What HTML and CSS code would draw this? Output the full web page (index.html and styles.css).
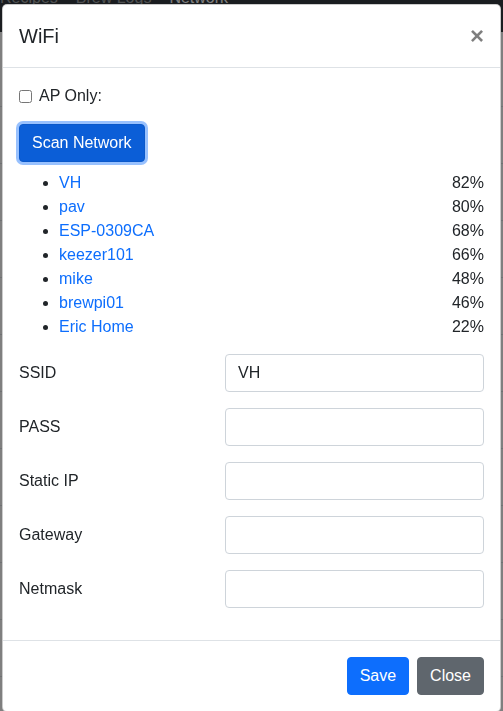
FILE: index.html
```html
<!DOCTYPE html>
<html>
<head>
<meta charset="utf-8">
<link rel="stylesheet" href="styles.css">
</head>
<body>
<nav class="navbar">
  <a class="nav-link">Recipes</a>
  <a class="nav-link">Brew Logs</a>
  <a class="nav-link active">Network</a>
</nav>
<main class="page"></main>
<div class="backdrop"></div>
<div class="modal">
  <div class="modal-header">
    <h5 class="modal-title">WiFi</h5>
    <button class="close" type="button">×</button>
  </div>
  <div class="modal-body">
    <label class="check-row"><input type="checkbox" class="check"> AP Only:</label>
    <button class="btn btn-scan" type="button">Scan Network</button>
    <ul class="nets">
      <li><div class="net"><a>VH</a><span>82%</span></div></li>
      <li><div class="net"><a>pav</a><span>80%</span></div></li>
      <li><div class="net"><a>ESP-0309CA</a><span>68%</span></div></li>
      <li><div class="net"><a>keezer101</a><span>66%</span></div></li>
      <li><div class="net"><a>mike</a><span>48%</span></div></li>
      <li><div class="net"><a>brewpi01</a><span>46%</span></div></li>
      <li><div class="net"><a>Eric Home</a><span>22%</span></div></li>
    </ul>
    <div class="form-row"><label>SSID</label><input class="form-control" type="text" value="VH"></div>
    <div class="form-row"><label>PASS</label><input class="form-control" type="password"></div>
    <div class="form-row"><label>Static IP</label><input class="form-control" type="text"></div>
    <div class="form-row"><label>Gateway</label><input class="form-control" type="text"></div>
    <div class="form-row"><label>Netmask</label><input class="form-control" type="text"></div>
  </div>
  <div class="modal-footer">
    <button class="btn btn-primary" type="button">Save</button>
    <button class="btn btn-secondary" type="button">Close</button>
  </div>
</div>
</body>
</html>
```

FILE: styles.css
```css
* { box-sizing: border-box; }
html, body { margin: 0; padding: 0; }
body {
  font-family: "Liberation Sans", Arial, sans-serif;
  font-size: 16px;
  line-height: 1.5;
  color: #212529;
  background: #fff;
  height: 711px;
  overflow: hidden;
}
.navbar {
  height: 32px;
  background: #343a40;
  display: flex;
  gap: 18px;
  padding-left: 0;
  overflow: hidden;
}
.nav-link {
  margin-top: -14px;
  color: rgba(255,255,255,.55);
  line-height: 24px;
  height: 24px;
}
.nav-link.active { color: #fff; }
.page {
  height: 679px;
  background: repeating-linear-gradient(to bottom, #fff 0, #fff 56px, #dee2e6 56px, #dee2e6 57px);
  background-position: 0 18px;
}
.backdrop {
  position: fixed;
  inset: 0;
  background: rgba(0,0,0,.5);
}
.modal {
  position: fixed;
  left: 2px;
  top: 4px;
  width: 499px;
  background: #fff;
  border: 1px solid rgba(0,0,0,.2);
  border-radius: 5px;
}
.modal-header {
  display: flex;
  align-items: center;
  padding: 16px;
  border-bottom: 1px solid #dee2e6;
}
.modal-title {
  margin: 0;
  font-size: 20px;
  font-weight: 500;
  line-height: 30px;
}
.close {
  margin-left: auto;
  background: none;
  border: 0;
  padding: 0;
  font-family: "Liberation Sans", Arial, sans-serif;
  font-size: 24px;
  font-weight: 700;
  line-height: 1;
  color: #000;
  opacity: .5;
}
.modal-body {
  padding: 16px;
  display: flex;
  flex-direction: column;
  align-items: flex-start;
}
.check-row {
  display: flex;
  align-items: center;
  gap: 7px;
  line-height: 24px;
  margin-bottom: 16px;
}
.check {
  margin: 0;
  width: 13px;
  height: 13px;
}
.btn {
  font-family: "Liberation Sans", Arial, sans-serif;
  font-size: 16px;
  line-height: 24px;
  padding: 6px 12px;
  border: 1px solid transparent;
  border-radius: 4px;
  color: #fff;
}
.btn-scan {
  background: #0b5ed7;
  border-color: #0a58ca;
  box-shadow: 0 0 0 3px rgba(49,132,253,.5);
}
.nets {
  align-self: stretch;
  margin: 9px 0 15px;
  padding-left: 40px;
}
.net {
  display: flex;
  justify-content: space-between;
  line-height: 24px;
}
.net a { color: #0d6efd; }
.form-row {
  align-self: stretch;
  display: grid;
  grid-template-columns: 206px 1fr;
  align-items: center;
  margin-bottom: 16px;
}
.form-row label { line-height: 24px; }
.form-control {
  height: 38px;
  padding: 6px 12px;
  font-family: "Liberation Sans", Arial, sans-serif;
  font-size: 16px;
  color: #212529;
  border: 1px solid #ced4da;
  border-radius: 4px;
  background: #fff;
  width: 100%;
}
.modal-footer {
  display: flex;
  justify-content: flex-end;
  padding: 12px;
  border-top: 1px solid #dee2e6;
}
.modal-footer .btn { margin: 4px; }
.btn-primary { background: #0d6efd; border-color: #0d6efd; }
.btn-secondary { background: #5f666d; border-color: #5f666d; }
```
